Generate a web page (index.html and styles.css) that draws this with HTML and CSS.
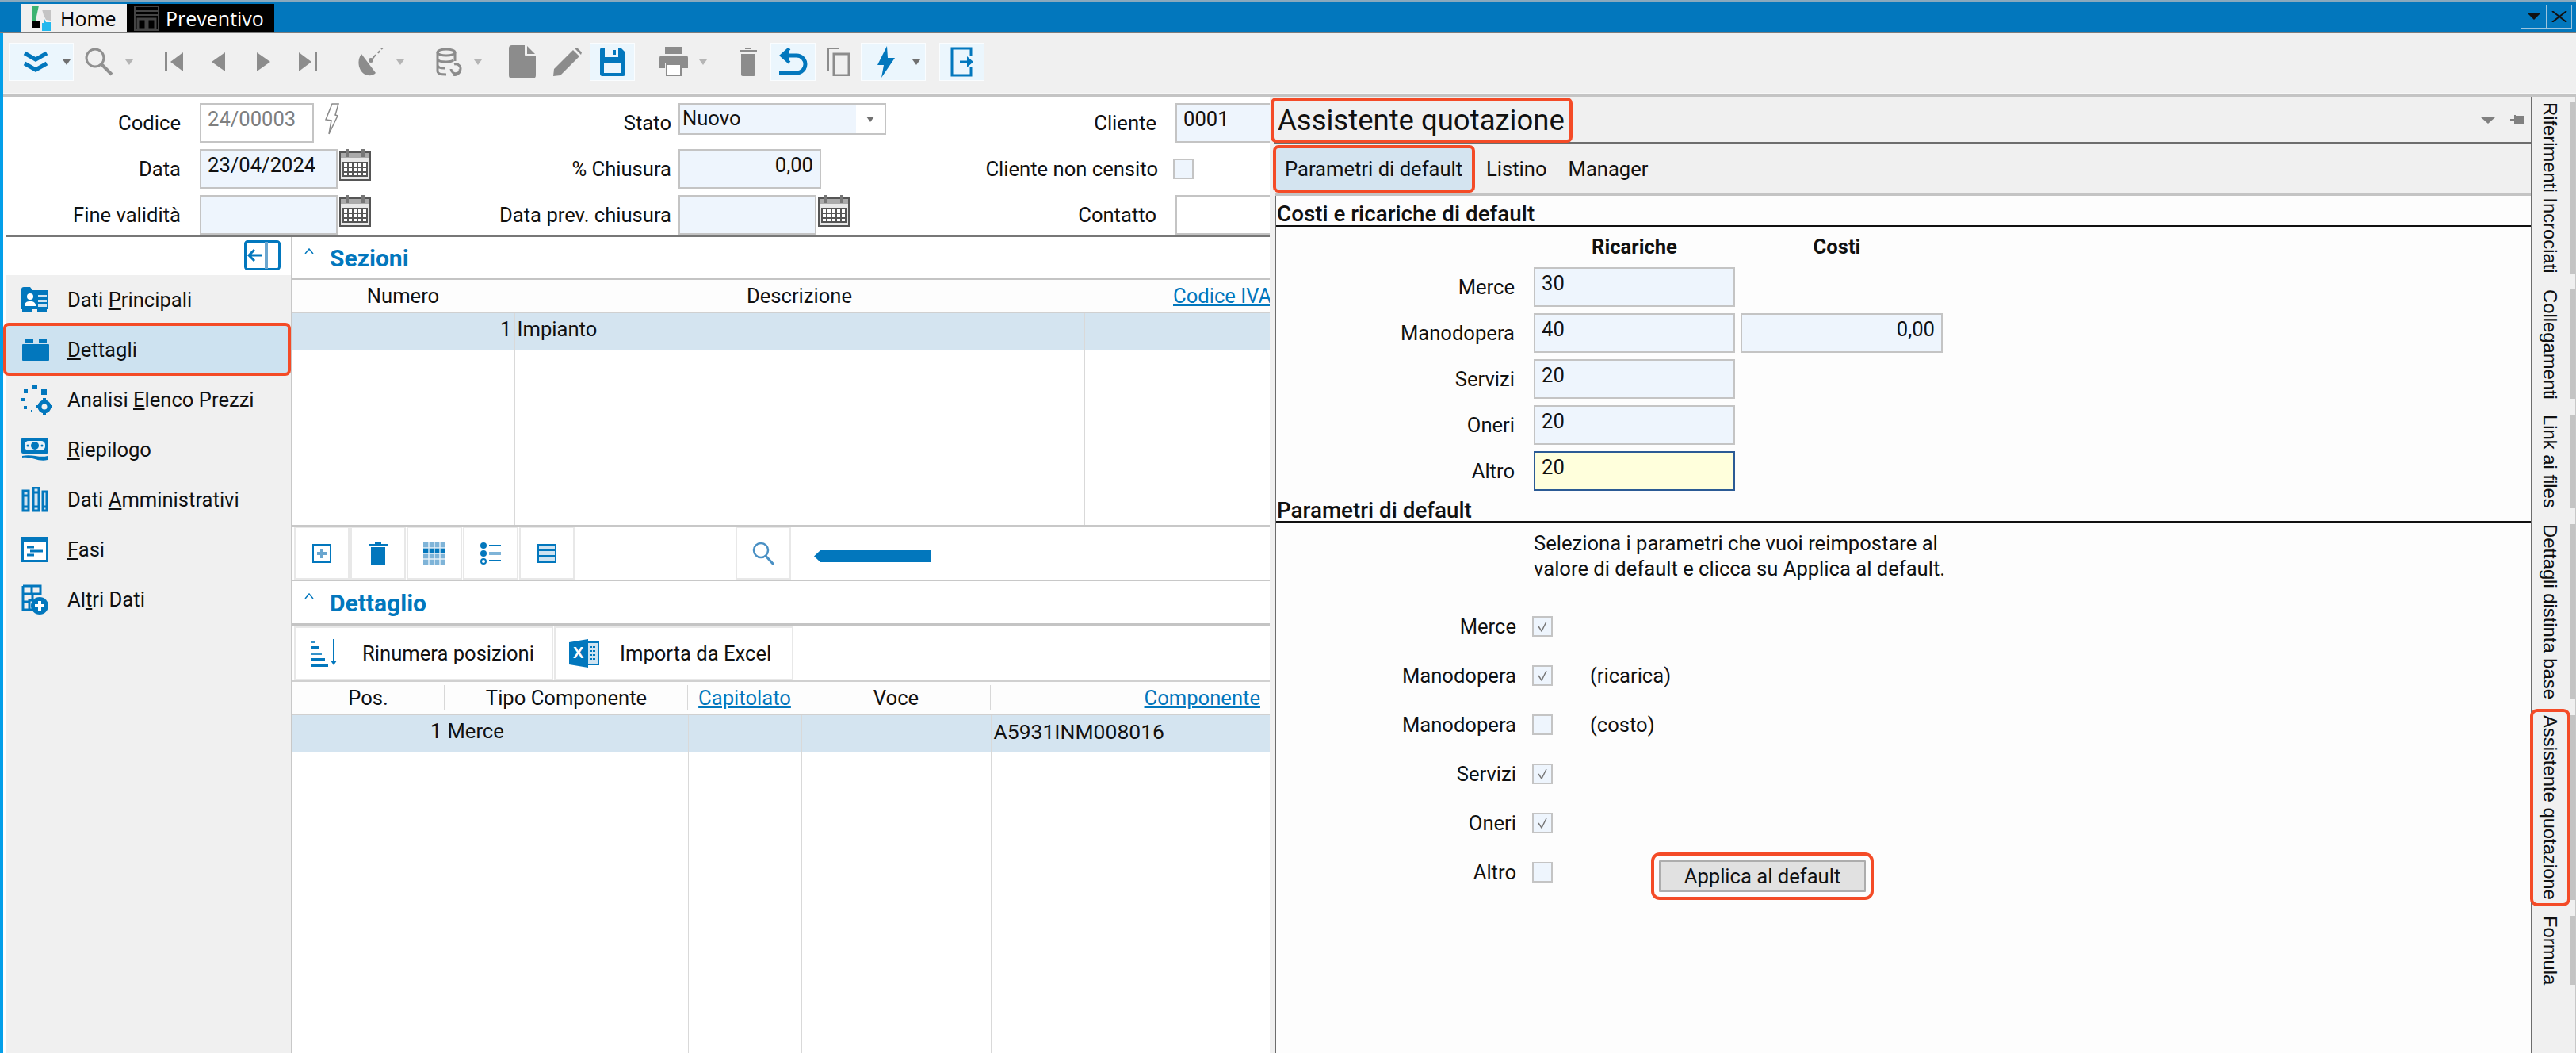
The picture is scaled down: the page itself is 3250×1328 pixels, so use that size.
FILE: index.html
```html
<!DOCTYPE html>
<html lang="it">
<head>
    <meta charset="UTF-8">
    <title>Preventivo</title>
    <link rel="stylesheet" href="styles.css">
</head>
<body>
    <!-- window title bar -->
    <div class="titlebar">
        <div class="doc-tab doc-tab-home">
            <svg class="tab-icon" width="24" height="32" viewBox="0 0 24 32"><path d="M0 0h9L6 14v7H0z" fill="#3cb371"/><path d="M13 5h11v14l-6-1-3-6z" fill="#c4c4c4"/><rect x="0" y="19" width="11" height="9" fill="#000"/><path d="M15 15l3 6h6v11H13V22h3z" fill="#22b8ee"/></svg>
            <span>Home</span>
        </div>
        <div class="doc-tab doc-tab-dark">
            <svg class="tab-icon" width="32" height="32" viewBox="0 0 32 32" fill="none" stroke="#444" stroke-width="2"><rect x="1" y="1" width="30" height="30"/><path d="M1 7h30M1 12h30"/><path d="M5 17h10v13H5zM17 17h10v13H17z" stroke-width="3"/></svg>
            <span>Preventivo</span>
        </div>
        <div class="win-buttons">
            <div class="win-btn"><svg width="16" height="8" viewBox="0 0 16 8"><path d="M0 0h16L8 8z" fill="#111"/></svg></div>
            <div class="win-btn"><svg width="20" height="14" viewBox="0 0 20 14" fill="none" stroke="#111" stroke-width="2"><path d="M1 0l18 14M19 0L1 14"/></svg></div>
        </div>
    </div>

    <div class="app">
        <!-- main toolbar -->
        <div class="toolbar">
            <div class="tool tool-split tool-on tool-more">
                <svg width="32" height="28" viewBox="0 0 32 28" fill="none" stroke="#0277bd" stroke-width="5"><path d="M2 3l14 8 14-8M2 16l14 8 14-8"/></svg>
                <span class="caret"></span>
            </div>
            <div class="tool tool-split tool-search">
                <svg width="36" height="36" viewBox="0 0 36 36" fill="none" stroke="#909090" stroke-width="3"><circle cx="13" cy="13" r="11"/><path d="M21 21l13 13" stroke-width="4"/></svg>
                <span class="caret caret-light"></span>
            </div>
            <div class="tool-group tool-nav">
                <div class="tool tool-narrow"><svg width="24" height="24" viewBox="0 0 24 24" fill="#8c8c8c"><rect x="0" y="0" width="3" height="24"/><path d="M23 0v24L7 12z"/></svg></div>
                <div class="tool tool-narrow"><svg width="20" height="24" viewBox="0 0 20 24" fill="#8c8c8c"><path d="M18 0v24L1 12z"/></svg></div>
                <div class="tool tool-narrow"><svg width="20" height="24" viewBox="0 0 20 24" fill="#8c8c8c"><path d="M2 0v24l17-12z"/></svg></div>
                <div class="tool tool-narrow"><svg width="24" height="24" viewBox="0 0 24 24" fill="#8c8c8c"><rect x="21" y="0" width="3" height="24"/><path d="M1 0v24l16-12z"/></svg></div>
            </div>
            <div class="tool tool-split tool-sat">
                <svg width="34" height="36" viewBox="0 0 34 36"><path d="M5 8C-1 16 1 28 8 33c5 3 11 3 15-1z" fill="#8c8c8c"/><path d="M10 11l12 10" stroke="#f0f0f0" stroke-width="2"/><circle cx="17" cy="16" r="3" fill="#8c8c8c"/><path d="M19 14l4-5M26 7l2-3M30 2l2-2" stroke="#8c8c8c" stroke-width="2"/></svg>
                <span class="caret caret-light"></span>
            </div>
            <div class="tool tool-split tool-db">
                <svg width="34" height="36" viewBox="0 0 34 36" fill="none" stroke="#8c8c8c" stroke-width="3"><ellipse cx="14" cy="6" rx="11" ry="4"/><path d="M3 6v24c0 3 5 4 11 4M25 6v11M3 14c0 3 5 4 11 4 4 0 7-.5 9-2M3 22c0 3 5 4 9 4"/><path d="M20 27a6 6 0 1 0 4-6M31 27a6 6 0 0 1-8 7"/></svg>
                <span class="caret caret-light"></span>
            </div>
            <div class="tool-group tool-edit">
                <div class="tool"><svg width="34" height="42" viewBox="0 0 34 42"><path d="M4 0h16v12a2 2 0 0 0 2 2h12v24a4 4 0 0 1-4 4H4a4 4 0 0 1-4-4V4a4 4 0 0 1 4-4z" fill="#8c8c8c"/><path d="M23 1l10 10H23z" fill="#8c8c8c"/></svg></div>
                <div class="tool"><svg width="36" height="36" viewBox="0 0 36 36" fill="#8c8c8c"><path d="M0 36l1-9L25 3l8 8L9 35z"/><path d="M27 1l3-1 6 6-1 3z"/></svg></div>
                <div class="tool tool-on"><svg width="32" height="36" viewBox="0 0 32 36"><path d="M3 0h23l6 6v27a3 3 0 0 1-3 3H3a3 3 0 0 1-3-3V3a3 3 0 0 1 3-3z" fill="#0277bd"/><rect x="6" y="0" width="17" height="12" fill="#ebf6fd"/><rect x="16" y="3" width="4" height="6" fill="#0277bd"/><rect x="5" y="19" width="22" height="13" fill="#ebf6fd"/></svg></div>
            </div>
            <div class="tool tool-split tool-print">
                <svg width="36" height="38" viewBox="0 0 36 38"><rect x="7" y="0" width="22" height="9" fill="#8c8c8c"/><path d="M3 11h30a3 3 0 0 1 3 3v13h-7v-7H7v7H0V14a3 3 0 0 1 3-3z" fill="#8c8c8c"/><rect x="9" y="22" width="18" height="14" fill="#fff" stroke="#8c8c8c" stroke-width="2"/></svg>
                <span class="caret caret-light"></span>
            </div>
            <div class="tool-group tool-last">
                <div class="tool"><svg width="22" height="36" viewBox="0 0 22 36" fill="#8c8c8c"><rect x="7" y="0" width="8" height="2"/><rect x="0" y="3" width="22" height="3"/><path d="M2 8h18v26a2 2 0 0 1-2 2H4a2 2 0 0 1-2-2z"/></svg></div>
                <div class="tool tool-on"><svg width="36" height="36" viewBox="0 0 36 36" fill="none" stroke="#0277bd" stroke-width="5"><path d="M13 10h9a11 11 0 0 1 11 11v0a11 11 0 0 1-11 11H0"/><path d="M13 1L3 10l10 9" stroke-width="4" fill="#0277bd"/></svg></div>
                <div class="tool"><svg width="30" height="36" viewBox="0 0 30 36" fill="none" stroke="#8c8c8c"><path d="M16 1H2v28" stroke-width="2"/><rect x="9" y="8" width="19" height="27" stroke-width="3"/></svg></div>
                <div class="tool tool-split tool-on tool-bolt">
                    <svg width="22" height="40" viewBox="0 0 22 40"><path d="M12 0L0 24h8L5 40 22 15h-9z" fill="#0277bd"/></svg>
                    <span class="caret"></span>
                </div>
            </div>
            <div class="tool tool-on tool-exit">
                <svg width="30" height="38" viewBox="0 0 30 38" fill="none" stroke="#0277bd" stroke-width="3"><path d="M26 12V2H2v34h24V26"/><path d="M12 19h14" /><path d="M21 12l8 7-8 7z" fill="#0277bd" stroke="none"/></svg>
            </div>
        </div>

        <div class="workspace">
            <div class="left-pane">
                <!-- document form -->
                <form class="doc-form">
                    <label class="lbl lbl-a">Codice</label>
                    <div class="fld">
                        <div class="input input-ro input-code">24/00003</div>
                        <svg class="bolt-outline" width="20" height="40" viewBox="0 0 20 40" fill="#fff" stroke="#8a8a8a" stroke-width="1.5"><path d="M11 1h8l-4 14 3 1-11 23 3-17-7-1z"/></svg>
                    </div>
                    <label class="lbl lbl-b">Stato</label>
                    <div class="fld">
                        <div class="select"><span class="select-value">Nuovo</span><span class="select-arrow"><span class="caret"></span></span></div>
                    </div>
                    <label class="lbl lbl-c">Cliente</label>
                    <div class="fld"><div class="input input-client">0001</div></div>

                    <label class="lbl lbl-a">Data</label>
                    <div class="fld">
                        <div class="input input-date">23/04/2024</div>
                        <svg class="cal" width="40" height="40" viewBox="0 0 40 40"><rect x="1" y="4" width="38" height="35" fill="#e8e8e8" stroke="#555" stroke-width="2"/><rect x="2" y="5" width="36" height="6" fill="#aaa"/><rect x="8" y="0" width="4" height="10" fill="#777"/><rect x="28" y="0" width="4" height="10" fill="#777"/><path d="M5 17h30v17H5zM5 23h30M5 29h30M11 17v17M17 17v17M23 17v17M29 17v17" fill="#fff" stroke="#555" stroke-width="2"/></svg>
                    </div>
                    <label class="lbl lbl-b">% Chiusura</label>
                    <div class="fld"><div class="input input-perc">0,00</div></div>
                    <label class="lbl lbl-c lbl-check">Cliente non censito</label>
                    <div class="fld"><span class="check check-form"></span></div>

                    <label class="lbl lbl-a">Fine validità</label>
                    <div class="fld">
                        <div class="input input-date"></div>
                        <svg class="cal" width="40" height="40" viewBox="0 0 40 40"><rect x="1" y="4" width="38" height="35" fill="#e8e8e8" stroke="#555" stroke-width="2"/><rect x="2" y="5" width="36" height="6" fill="#aaa"/><rect x="8" y="0" width="4" height="10" fill="#777"/><rect x="28" y="0" width="4" height="10" fill="#777"/><path d="M5 17h30v17H5zM5 23h30M5 29h30M11 17v17M17 17v17M23 17v17M29 17v17" fill="#fff" stroke="#555" stroke-width="2"/></svg>
                    </div>
                    <label class="lbl lbl-b">Data prev. chiusura</label>
                    <div class="fld">
                        <div class="input input-date"></div>
                        <svg class="cal" width="40" height="40" viewBox="0 0 40 40"><rect x="1" y="4" width="38" height="35" fill="#e8e8e8" stroke="#555" stroke-width="2"/><rect x="2" y="5" width="36" height="6" fill="#aaa"/><rect x="8" y="0" width="4" height="10" fill="#777"/><rect x="28" y="0" width="4" height="10" fill="#777"/><path d="M5 17h30v17H5zM5 23h30M5 29h30M11 17v17M17 17v17M23 17v17M29 17v17" fill="#fff" stroke="#555" stroke-width="2"/></svg>
                    </div>
                    <label class="lbl lbl-c">Contatto</label>
                    <div class="fld"><div class="input input-ro input-client"></div></div>
                </form>

                <div class="split">
                    <!-- section navigation -->
                    <div class="sidebar">
                        <div class="sidebar-top">
                            <svg width="46" height="38" viewBox="0 0 46 38" fill="none" stroke="#0277bd"><rect x="1.5" y="1.5" width="43" height="35" rx="3" stroke-width="3"/><path d="M28 2v34" stroke="#6ba6cf" stroke-width="4"/><path d="M22 19H7M13 12l-7 7 7 7" stroke-width="3"/></svg>
                        </div>
                        <nav class="side-nav">
                            <div class="side-item">
                                <svg width="34" height="32" viewBox="0 0 34 32"><path d="M0 3a3 3 0 0 1 3-3h8l3 4h20v24H0z" fill="#0277bd"/><circle cx="11" cy="12" r="4" fill="#fff"/><path d="M4 24c0-5 3-6 7-6s7 1 7 6z" fill="#fff"/><path d="M21 10h11v3H21zM21 16h11v3H21zM21 22h11v3H21z" fill="#cfe3f1"/><rect x="1" y="28" width="12" height="3" fill="#0277bd"/><rect x="20" y="28" width="12" height="3" fill="#0277bd"/></svg>
                                <span>Dati <u>P</u>rincipali</span>
                            </div>
                            <div class="side-item side-item-on">
                                <svg width="34" height="28" viewBox="0 0 34 28" fill="#0277bd"><rect x="3" y="0" width="11" height="5"/><rect x="21" y="0" width="10" height="5"/><rect x="0" y="7" width="34" height="21" rx="1"/></svg>
                                <span><u>D</u>ettagli</span>
                            </div>
                            <div class="side-item">
                                <svg width="38" height="38" viewBox="0 0 38 38" fill="#0277bd"><rect x="14" y="0" width="6" height="6"/><rect x="3" y="6" width="5" height="5"/><rect x="25" y="6" width="7" height="7"/><rect x="0" y="17" width="4" height="4"/><rect x="3" y="27" width="4" height="4"/><rect x="12" y="32" width="2" height="2"/><circle cx="29" cy="28" r="6" fill="none" stroke="#0277bd" stroke-width="5"/><path d="M27 17h4v4h-4zM27 35h4v3h-4zM18 26h4v4h-4zM35 26h3v4h-3z"/></svg>
                                <span>Analisi <u>E</u>lenco Prezzi</span>
                            </div>
                            <div class="side-item">
                                <svg width="34" height="32" viewBox="0 0 34 32"><rect x="0" y="1" width="34" height="20" rx="2" fill="#0277bd"/><rect x="4" y="5" width="26" height="12" rx="5" fill="#eaf2f8"/><circle cx="17" cy="11" r="5" fill="#0277bd"/><circle cx="8" cy="11" r="1.5" fill="#0277bd"/><circle cx="26" cy="11" r="1.5" fill="#0277bd"/><path d="M1 24v2c12-2 20 6 32 3v-5c-10 3-20-3-32 0z" fill="#0277bd"/></svg>
                                <span><u>R</u>iepilogo</span>
                            </div>
                            <div class="side-item">
                                <svg width="34" height="32" viewBox="0 0 34 32"><g fill="#cfe3f1" stroke="#0277bd" stroke-width="3"><rect x="2" y="5" width="7" height="25"/><rect x="15" y="1" width="7" height="29"/><rect x="27" y="6" width="5" height="24"/></g><path d="M2 11h7M15 7h7M2 25h7M15 25h7M27 25h5" stroke="#0277bd" stroke-width="3"/></svg>
                                <span>Dati <u>A</u>mministrativi</span>
                            </div>
                            <div class="side-item">
                                <svg width="34" height="32" viewBox="0 0 34 32"><rect x="1.5" y="1.5" width="31" height="29" fill="#fff" stroke="#0277bd" stroke-width="3"/><rect x="0" y="0" width="34" height="6" fill="#0277bd"/><path d="M7 13h9M11 18h16M7 23h9" stroke="#0277bd" stroke-width="3"/></svg>
                                <span><u>F</u>asi</span>
                            </div>
                            <div class="side-item">
                                <svg width="34" height="38" viewBox="0 0 34 38"><path d="M2 2h22v10H14v8h-4v12h6M2 2v30h10M2 12h22M13 2v10M2 22h8" fill="none" stroke="#0277bd" stroke-width="3"/><circle cx="23" cy="27" r="11" fill="#0277bd"/><path d="M23 21v12M17 27h12" stroke="#fff" stroke-width="4"/></svg>
                                <span>Al<u>t</u>ri Dati</span>
                            </div>
                        </nav>
                    </div>

                    <div class="grids">
                        <div class="group-head">
                            <svg width="12" height="7" viewBox="0 0 12 7" fill="none" stroke="#0277bd" stroke-width="1.5"><path d="M1 7l5-6 5 6"/></svg>
                            <span>Sezioni</span>
                        </div>
                        <table class="grid grid-sections">
                            <tr>
                                <th class="c-num">Numero</th>
                                <th class="c-desc">Descrizione</th>
                                <th class="c-link"><a href="#">Codice IVA</a></th>
                            </tr>
                            <tr class="row-on">
                                <td class="num">1</td>
                                <td>Impianto</td>
                                <td></td>
                            </tr>
                            <tr class="row-fill"><td></td><td></td><td></td></tr>
                        </table>
                        <div class="grid-tools">
                            <div class="gtool"><svg width="24" height="24" viewBox="0 0 24 24" fill="none" stroke="#0277bd"><rect x="1" y="1" width="22" height="22" stroke-width="2"/><path d="M12 6v12M6 12h12" stroke="#6ba6cf" stroke-width="4"/></svg></div>
                            <div class="gtool"><svg width="24" height="28" viewBox="0 0 24 28" fill="#0277bd"><rect x="8" y="0" width="8" height="2"/><rect x="0" y="2" width="24" height="2"/><rect x="3" y="6" width="18" height="22"/></svg></div>
                            <div class="gtool"><svg width="28" height="28" viewBox="0 0 28 28"><rect width="28" height="28" fill="#7fb4d8"/><rect y="7" width="28" height="7" fill="#0277bd"/><path d="M7 0v28M14 0v28M21 0v28M0 7h28M0 14h28M0 21h28" stroke="#fff" stroke-width="1.5" opacity=".8"/></svg></div>
                            <div class="gtool"><svg width="26" height="28" viewBox="0 0 26 28"><circle cx="4" cy="4" r="4" fill="#0277bd"/><circle cx="4" cy="14" r="4" fill="#0277bd"/><circle cx="4" cy="24" r="3" fill="#fff" stroke="#0277bd" stroke-width="2"/><path d="M11 4h15M11 23h15" stroke="#0277bd" stroke-width="2"/><path d="M11 14h15" stroke="#7fb4d8" stroke-width="4"/></svg></div>
                            <div class="gtool"><svg width="24" height="24" viewBox="0 0 24 24"><rect x="1" y="1" width="22" height="22" fill="#cfe3f1" stroke="#0277bd" stroke-width="2"/><path d="M1 8h22M1 15h22" stroke="#0277bd" stroke-width="2"/></svg></div>
                            <div class="gtool gtool-search"><svg width="28" height="30" viewBox="0 0 28 30" fill="none" stroke="#4a90c4" stroke-width="2.5"><circle cx="11" cy="11" r="9"/><path d="M17 18l10 11" stroke-width="3"/></svg></div>
                            <div class="h-scroll"></div>
                        </div>
                        <div class="group-head group-head-2">
                            <svg width="12" height="7" viewBox="0 0 12 7" fill="none" stroke="#0277bd" stroke-width="1.5"><path d="M1 7l5-6 5 6"/></svg>
                            <span>Dettaglio</span>
                        </div>
                        <div class="grid-actions">
                            <div class="action action-renum">
                                <svg width="38" height="36" viewBox="0 0 38 36"><g fill="#0277bd"><rect x="2" y="2" width="6" height="3" opacity=".8"/><rect x="2" y="9" width="10" height="3"/><rect x="2" y="17" width="14" height="3" opacity=".8"/><rect x="2" y="24" width="18" height="3"/><rect x="2" y="32" width="22" height="3"/><rect x="30" y="0" width="2" height="30"/><path d="M27 27h8l-4 6z"/></g></svg>
                                <span>Rinumera posizioni</span>
                            </div>
                            <div class="action action-excel">
                                <svg width="38" height="36" viewBox="0 0 38 36"><path d="M22 4h16v28H22z" fill="#cfe3f1" stroke="#0277bd" stroke-width="2"/><path d="M26 10h8M26 15h8M26 20h8M26 25h8" stroke="#0277bd" stroke-width="2" stroke-dasharray="3 1"/><path d="M0 4l24-4v36L0 32z" fill="#0277bd"/><text x="5" y="24" class="excel-x">X</text></svg>
                                <span>Importa da Excel</span>
                            </div>
                        </div>
                        <table class="grid grid-detail">
                            <tr>
                                <th class="c-pos">Pos.</th>
                                <th class="c-type">Tipo Componente</th>
                                <th class="c-cap"><a href="#">Capitolato</a></th>
                                <th class="c-voce">Voce</th>
                                <th class="right"><a href="#">Componente</a></th>
                            </tr>
                            <tr class="row-on">
                                <td class="num">1</td>
                                <td>Merce</td>
                                <td></td>
                                <td></td>
                                <td class="code">A5931INM008016</td>
                            </tr>
                            <tr class="row-fill"><td></td><td></td><td></td><td></td><td></td></tr>
                        </table>
                    </div>
                </div>
            </div>

            <!-- docked panel -->
            <div class="panel">
                <div class="panel-head">
                    <div class="panel-title mark">Assistente quotazione</div>
                    <svg class="panel-menu" width="18" height="8" viewBox="0 0 18 8"><path d="M0 0h18L9 8z" fill="#808080"/></svg>
                    <svg class="panel-pin" width="18" height="12" viewBox="0 0 18 12" fill="none" stroke="#808080" stroke-width="2"><path d="M0 6h6M6 0v12M6 2h11v8H6"/><rect x="8" y="3" width="8" height="6" fill="#808080"/></svg>
                </div>
                <div class="panel-tabs">
                    <div class="ptab ptab-on mark">Parametri di default</div>
                    <div class="ptab ptab-first">Listino</div>
                    <div class="ptab">Manager</div>
                </div>
                <div class="panel-body">
                    <div class="sec-title">Costi e ricariche di default</div>
                    <div class="rates">
                        <div></div><div class="rate-head">Ricariche</div><div class="rate-head rate-head-cost">Costi</div>
                        <label class="rate-lbl">Merce</label><div class="input rate">30</div><div></div>
                        <label class="rate-lbl">Manodopera</label><div class="input rate">40</div><div class="input rate rate-cost">0,00</div>
                        <label class="rate-lbl">Servizi</label><div class="input rate">20</div><div></div>
                        <label class="rate-lbl">Oneri</label><div class="input rate">20</div><div></div>
                        <label class="rate-lbl">Altro</label><div class="input rate rate-focus">20<span class="cursor"></span></div><div></div>
                    </div>
                    <div class="sec-title sec-title-2">Parametri di default</div>
                    <p class="hint">Seleziona i parametri che vuoi reimpostare al<br>valore di default e clicca su Applica al default.</p>
                    <div class="defaults">
                        <div class="def-row"><label>Merce</label><span class="check checked"><svg width="14" height="14" viewBox="0 0 14 14" fill="none" stroke="#777" stroke-width="1.5"><path d="M2 7l4 6 6-12"/></svg></span></div>
                        <div class="def-row"><label>Manodopera</label><span class="check checked"><svg width="14" height="14" viewBox="0 0 14 14" fill="none" stroke="#777" stroke-width="1.5"><path d="M2 7l4 6 6-12"/></svg></span><span class="def-note">(ricarica)</span></div>
                        <div class="def-row"><label>Manodopera</label><span class="check"></span><span class="def-note">(costo)</span></div>
                        <div class="def-row"><label>Servizi</label><span class="check checked"><svg width="14" height="14" viewBox="0 0 14 14" fill="none" stroke="#777" stroke-width="1.5"><path d="M2 7l4 6 6-12"/></svg></span></div>
                        <div class="def-row"><label>Oneri</label><span class="check checked"><svg width="14" height="14" viewBox="0 0 14 14" fill="none" stroke="#777" stroke-width="1.5"><path d="M2 7l4 6 6-12"/></svg></span></div>
                        <div class="def-row"><label>Altro</label><span class="check"></span><button class="apply" type="button">Applica al default</button></div>
                    </div>
                </div>
            </div>

            <!-- vertical tabs -->
            <div class="vtabs">
                <div class="vtab"><span class="vlabel">Riferimenti Incrociati</span></div>
                <div class="vtab"><span class="vlabel">Collegamenti</span></div>
                <div class="vtab"><span class="vlabel">Link ai files</span></div>
                <div class="vtab"><span class="vlabel">Dettagli distinta base</span></div>
                <div class="vtab vtab-on"><span class="vlabel">Assistente quotazione</span></div>
                <div class="vtab"><span class="vlabel">Formula</span></div>
            </div>
        </div>
    </div>
</body>
</html>
```

FILE: styles.css
```css
:root {
    --blue: #0277bd;
    --field: #eef5fd;
    --field-border: #c4c4c4;
    --panel: #f0f0f0;
    --row-on: #d4e4f0;
    --red: #f44b27;
}

* {
    margin: 0;
    padding: 0;
    box-sizing: border-box;
}

html, body {
    width: 3250px;
    height: 1328px;
    overflow: hidden;
}

body {
    font-family: Roboto, "Liberation Sans", sans-serif;
    font-size: 25.6px;
    color: #111;
    background: #fff;
    display: flex;
    flex-direction: column;
}

/* Title bar */
.titlebar {
    height: 42px;
    background: var(--blue);
    border-top: 2px solid #8aa9bd;
    border-bottom: 2px solid #7d7d7d;
    display: flex;
    align-items: flex-start;
    padding: 3px 5px 0 27px;
    flex: none;
}

.doc-tab {
    height: 35px;
    display: flex;
    align-items: center;
    font-family: "Open Sans", "Noto Sans", sans-serif;
    font-size: 25px;
}

.doc-tab-home {
    width: 133px;
    background: #f0f0f0;
    padding-left: 13px;
    gap: 12px;
    color: #000;
}

.doc-tab-dark {
    width: 186px;
    background: #000;
    color: #fff;
    padding-left: 9px;
    gap: 8px;
}

.tab-icon {
    flex: none;
}

.win-buttons {
    margin-left: auto;
    display: flex;
    height: 30px;
    margin-top: 1px;
}

.win-btn {
    width: 32px;
    display: flex;
    align-items: center;
    justify-content: center;
    border-right: 1px solid #9cc4dd;
    border-bottom: 1px solid #9cc4dd;
}

/* App frame */
.app {
    flex: 1;
    display: flex;
    flex-direction: column;
    border-left: 4px solid #049fe9;
    min-height: 0;
}

/* Toolbar */
.toolbar {
    height: 80px;
    flex: none;
    background: var(--panel);
    border-bottom: 3px solid #c4c4c4;
    box-shadow: inset 0 -2px 0 #f7f7f7;
    display: flex;
    align-items: flex-start;
    padding: 12px 0 0 7px;
}

.tool-group {
    display: flex;
}

.tool {
    width: 57px;
    height: 48px;
    display: flex;
    align-items: center;
    justify-content: center;
    border: 1px solid transparent;
}

.tool-narrow {
    width: 56px;
}

.tool-on {
    background: #ebf6fd;
    border-color: #fafdff;
}

.tool-split {
    width: 80px;
    justify-content: flex-start;
    position: relative;
}

.tool-split .caret {
    position: absolute;
    right: 5px;
    top: 20px;
}

.tool-more { width: 82px; padding-left: 17px; }
.tool-more .caret { right: 3px; }
.tool-search { width: 72px; margin-left: 7px; padding-left: 6px; }
.tool-search .caret { right: 3px; }
.tool-nav { margin-left: 20px; }
.tool-sat { margin-left: 24px; padding-left: 10px; }
.tool-sat .caret { right: 9px; }
.tool-db { margin-left: 20px; padding-left: 8px; }
.tool-db .caret { right: 11px; }
.tool-edit { margin-left: 10px; }
.tool-print { margin-left: 18px; padding-left: 12px; }
.tool-print .caret { right: 6px; }
.tool-last { margin-left: 16px; }
.tool-bolt { width: 82px; padding-left: 20px; }
.tool-bolt .caret { right: 6px; }
.tool-exit { margin-left: 17px; }

.caret {
    display: inline-block;
    width: 0;
    height: 0;
    border-left: 5px solid transparent;
    border-right: 5px solid transparent;
    border-top: 7px solid #707070;
}

.caret-light {
    border-top-color: #b5b5b5;
}

/* Workspace */
.workspace {
    flex: 1;
    display: flex;
    min-height: 0;
}

.left-pane {
    width: 1598px;
    flex: none;
    display: flex;
    flex-direction: column;
    padding-left: 3px;
    overflow: hidden;
}

/* Form */
.doc-form {
    height: 177px;
    flex: none;
    border-bottom: 2px solid #777;
    display: grid;
    grid-template-columns: 245px 354px 250px 375px 252px 119px;
    grid-template-rows: 50px 50px 50px;
    row-gap: 8px;
    padding-top: 8px;
}

.lbl {
    display: flex;
    align-items: center;
    justify-content: flex-end;
    margin-top: -1px;
}

.lbl-a { padding-right: 24px; }
.lbl-b { padding-right: 9px; }
.lbl-c { padding-right: 24px; }
.lbl-check { padding-right: 22px; }

.fld {
    display: flex;
    align-items: flex-start;
}

.input {
    height: 50px;
    background: var(--field);
    border: 2px solid var(--field-border);
    padding: 0 8px;
    line-height: 37px;
    white-space: nowrap;
}

.input-ro {
    background: #fff;
}

.input-code {
    width: 144px;
    color: #7f7f7f;
}

.bolt-outline {
    margin-left: 12px;
}

.input-date {
    width: 174px;
}

.input-perc {
    width: 180px;
    text-align: right;
}

/* runs on under the docked panel, so no right edge shows */
.input-client {
    width: 140px;
    flex: none;
}

.cal {
    margin-left: 2px;
}

.select {
    width: 262px;
    height: 40px;
    display: flex;
    border: 2px solid var(--field-border);
}

.select-value {
    flex: 1;
    background: var(--field);
    padding-left: 3px;
    line-height: 34px;
}

.select-arrow {
    width: 36px;
    background: #fff;
    display: flex;
    align-items: center;
    justify-content: center;
}

.check {
    width: 26px;
    height: 26px;
    flex: none;
    background: var(--field);
    border: 2px solid var(--field-border);
    display: flex;
    align-items: center;
    justify-content: center;
}

.check-form {
    margin: 12px 0 0 -3px;
}

/* Sidebar + grids */
.split {
    flex: 1;
    display: flex;
    min-height: 0;
}

.sidebar {
    width: 361px;
    flex: none;
    display: flex;
    flex-direction: column;
    border-right: 1px solid #c8c8c8;
}

.sidebar-top {
    height: 48px;
    flex: none;
    display: flex;
    justify-content: flex-end;
    padding: 4px 13px 0 0;
}

.side-nav {
    flex: 1;
    background: var(--panel);
    padding-top: 1px;
}

.side-item {
    height: 59px;
    margin-bottom: 4px;
    display: flex;
    align-items: center;
    position: relative;
}

.side-item svg {
    position: absolute;
    left: 20px;
    top: 50%;
    transform: translateY(-50%);
}

.side-item span {
    margin-left: 78px;
}

.side-item-on {
    background: #cde2f0;
    outline: 4px solid var(--red);
    border-radius: 3px;
    margin-right: 4px;
    margin-left: 1px;
}

.side-item-on span {
    margin-left: 77px;
}

.grids {
    flex: 1;
    display: flex;
    flex-direction: column;
    min-width: 0;
}

.group-head {
    height: 54px;
    flex: none;
    border-bottom: 3px solid #c4c4c4;
    display: flex;
    align-items: center;
    padding: 2px 0 0 16px;
    color: var(--blue);
    font-weight: 700;
    font-size: 30px;
}

.group-head svg {
    margin: -18px 20px 0 0;
}

.group-head-2 {
    height: 56px;
}

.grid {
    width: 100%;
    border-collapse: collapse;
    table-layout: fixed;
}

.grid-sections {
    height: 309px;
    flex: none;
}

.grid-detail {
    height: 468px;
    flex: none;
}

.grid th {
    height: 41px;
    background: #fdfdfd;
    font-weight: 400;
    border-bottom: 2px solid #d0d0d0;
    background-image: linear-gradient(#d8d8d8, #d8d8d8);
    background-repeat: no-repeat;
    background-size: 1px 32px;
    background-position: right center;
    text-align: center;
    white-space: nowrap;
    overflow: hidden;
}

.grid th:last-child {
    background-image: none;
}

.grid a {
    color: var(--blue);
}

.grid td {
    border-right: 1px solid #d9d9d9;
    padding: 0 3px;
    white-space: nowrap;
}

.grid td:last-child {
    border-right: none;
}

.grid .row-on td {
    height: 47px;
    padding-bottom: 6px;
    background: var(--row-on);
}

.num {
    text-align: right;
}

.code {
    font-size: 26.5px;
}

.grid .right {
    text-align: right;
    padding-right: 12px;
}

.c-num { width: 281px; }
.c-desc { width: 719px; }
.grid .c-link { text-align: left; padding-left: 112px; }
.c-pos { width: 193px; }
.c-type { width: 307px; }
.c-cap { width: 143px; }
.c-voce { width: 239px; }

.grid-tools {
    height: 71px;
    flex: none;
    border-top: 2px solid #c8c8c8;
    border-bottom: 2px solid #c8c8c8;
    display: flex;
    align-items: center;
    gap: 1px;
    padding-left: 3px;
}

.gtool {
    width: 70px;
    height: 67px;
    border: 2px solid #e8e8e8;
    display: flex;
    align-items: center;
    justify-content: center;
}

.gtool-search {
    margin-left: 202px;
}

.h-scroll {
    width: 147px;
    height: 15px;
    margin-left: 28px;
    margin-top: 8px;
    background: var(--blue);
    clip-path: polygon(8px 0, 100% 0, 100% 100%, 8px 100%, 0 50%);
}

.grid-actions {
    height: 71px;
    flex: none;
    display: flex;
    align-items: center;
    gap: 1px;
    padding-left: 3px;
    border-bottom: 2px solid #d0d0d0;
}

.action {
    height: 68px;
    border: 2px solid #e8e8e8;
    display: flex;
    align-items: center;
}

.action-renum {
    width: 327px;
    padding-left: 17px;
    gap: 29px;
}

.action-excel {
    width: 302px;
    padding-left: 17px;
    gap: 26px;
}

.excel-x {
    font-family: "Liberation Sans", sans-serif;
    font-size: 20px;
    font-weight: 700;
    fill: #fff;
}

/* Docked panel */
.panel {
    width: 1593px;
    flex: none;
    display: flex;
    flex-direction: column;
    background: var(--panel);
    border-right: 2px solid #6d6d6d;
    padding-left: 6px;
}

.mark {
    outline: 4px solid var(--red);
    border-radius: 3px;
}

.panel-head {
    height: 59px;
    flex: none;
    display: flex;
    align-items: flex-start;
    border-bottom: 2px solid #6d6d6d;
    padding-top: 5px;
    margin-left: -1px;
}

.panel-title {
    height: 49px;
    padding: 0 6px 0 5px;
    font-size: 36.5px;
    line-height: 50px;
    white-space: nowrap;
}

.panel-menu {
    margin: 21px 0 0 auto;
}

.panel-pin {
    margin: 18px 8px 0 19px;
}

.panel-tabs {
    height: 66px;
    flex: none;
    display: flex;
    border-bottom: 3px solid #c4c4c4;
    padding-top: 6px;
}

.ptab {
    height: 52px;
    line-height: 52px;
    margin-right: 27px;
}

.ptab-on {
    width: 247px;
    background: var(--row-on);
    padding-left: 11px;
    margin-left: 2px;
    margin-right: 18px;
}

.panel-body {
    flex: 1;
    background: #fdfdfd;
    border-left: 2px solid #6d6d6d;
}

.sec-title {
    height: 39px;
    border-bottom: 2px solid #111;
    font-weight: 500;
    font-size: 27.8px;
    line-height: 45px;
    padding-left: 1px;
    overflow: hidden;
    white-space: nowrap;
}

.rates {
    display: grid;
    grid-template-columns: 318px 254px 255px;
    grid-template-rows: 35px repeat(5, 50px);
    row-gap: 8px;
    column-gap: 7px;
    padding-top: 8px;
}

.rate-head {
    text-align: center;
    font-weight: 700;
    line-height: 35px;
}

.rate-head-cost {
    padding-right: 12px;
}

.rate-lbl {
    text-align: right;
    line-height: 50px;
    margin-right: -7px;
    padding-right: 24px;
}

.rate-cost {
    text-align: right;
}

.rate-focus {
    background: #ffffdc;
    border-color: #2b5b95;
}

.cursor {
    display: inline-block;
    width: 1px;
    height: 30px;
    background: #111;
    vertical-align: middle;
}

.sec-title-2 {
    margin-top: 2px;
    height: 38px;
}

.hint {
    margin: 10px 0 44px 325px;
    line-height: 32px;
}

.defaults {
    display: flex;
    flex-direction: column;
    gap: 36px;
}

.def-row {
    height: 26px;
    display: flex;
    align-items: center;
}

.def-row label {
    width: 303px;
    text-align: right;
    margin-right: 20px;
}

.def-note {
    margin-left: 47px;
}

.apply {
    width: 261px;
    height: 40px;
    margin: 10px 0 0 134px;
    background: #e1e1e1;
    border: 2px solid #adadad;
    font: inherit;
    color: #111;
    outline: 4px solid var(--red);
    outline-offset: 6px;
    border-radius: 1px;
    flex: none;
}

/* Vertical tabs */
.vtabs {
    flex: 1;
    background: var(--panel);
    display: flex;
    flex-direction: column;
    gap: 20px;
    padding-top: 7px;
    border-right: 1px solid #c8c8c8;
}

.vtab {
    border-right: 6px solid #c4c4c4;
    font-family: "Liberation Sans", Arial, sans-serif;
    font-size: 23.8px;
    display: flex;
    justify-content: flex-start;
}

.vlabel {
    writing-mode: vertical-rl;
    width: 35px;
    line-height: 35px;
    margin-left: 5px;
    white-space: nowrap;
}

.vtab-on .vlabel {
    outline: 4px solid var(--red);
    outline-offset: 4px;
    border-radius: 1px;
}
```
